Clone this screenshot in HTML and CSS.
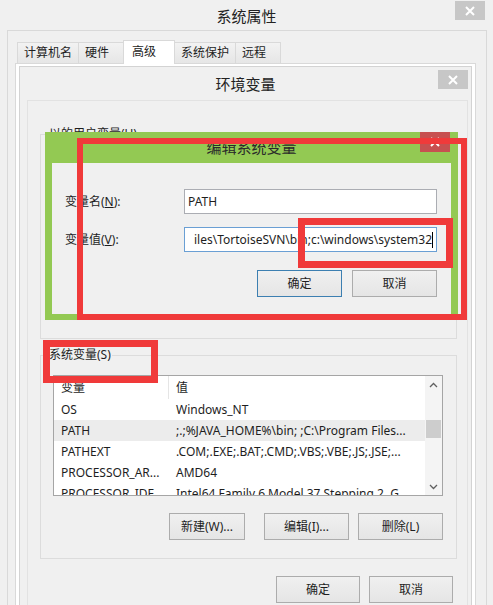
FILE: index.html
```html
<!DOCTYPE html>
<html lang="zh-CN">
<head>
    <meta charset="UTF-8">
    <meta name="viewport" content="width=device-width, initial-scale=1.0">
    <title>系统属性 - 环境变量</title>
    <link rel="stylesheet" href="styles.css">
</head>
<body>
    <div class="window window-sys">
        <div class="titlebar">
            <span>系统属性</span>
            <span class="close close-sys">
                <svg width="10" height="10" viewBox="0 0 10 10"><path d="M1 1L9 9M9 1L1 9" stroke="#fff" stroke-width="2"/></svg>
            </span>
        </div>
        <div class="sys-body">
            <div class="tabs">
                <div class="tab">计算机名</div>
                <div class="tab">硬件</div>
                <div class="tab tab-active">高级</div>
                <div class="tab">系统保护</div>
                <div class="tab">远程</div>
            </div>
            <div class="tab-panel">
                <div class="window window-env">
                    <div class="titlebar env-title">
                        <span>环境变量</span>
                        <span class="close close-env">
                            <svg width="10" height="10" viewBox="0 0 10 10"><path d="M1 1L9 9M9 1L1 9" stroke="#fff" stroke-width="2"/></svg>
                        </span>
                    </div>
                    <div class="env-body">
                        <fieldset class="group group-user">
                            <legend>以的用户变量(U)</legend>
                        </fieldset>

                        <fieldset class="group group-sys">
                            <legend>系统变量(S)</legend>
                            <div class="list">
                                <div class="list-table">
                                    <div class="row list-head">
                                        <div class="col-name">变量</div>
                                        <div class="col-value">值</div>
                                    </div>
                                    <div class="row">
                                        <div class="col-name">OS</div>
                                        <div class="col-value">Windows_NT</div>
                                    </div>
                                    <div class="row row-active">
                                        <div class="col-name">PATH</div>
                                        <div class="col-value">;.;%JAVA_HOME%\bin; ;C:\Program Files...</div>
                                    </div>
                                    <div class="row">
                                        <div class="col-name">PATHEXT</div>
                                        <div class="col-value">.COM;.EXE;.BAT;.CMD;.VBS;.VBE;.JS;.JSE;...</div>
                                    </div>
                                    <div class="row">
                                        <div class="col-name">PROCESSOR_AR...</div>
                                        <div class="col-value">AMD64</div>
                                    </div>
                                    <div class="row">
                                        <div class="col-name">PROCESSOR_IDE...</div>
                                        <div class="col-value">Intel64 Family 6 Model 37 Stepping 2, G...</div>
                                    </div>
                                </div>
                                <div class="scrollbar">
                                    <div class="arrow">
                                        <svg width="9" height="6" viewBox="0 0 9 6"><path d="M1 5L4.5 1.5L8 5" fill="none" stroke="#606060" stroke-width="1.3"/></svg>
                                    </div>
                                    <div class="track"><div class="thumb"></div></div>
                                    <div class="arrow">
                                        <svg width="9" height="6" viewBox="0 0 9 6"><path d="M1 1L4.5 4.5L8 1" fill="none" stroke="#606060" stroke-width="1.3"/></svg>
                                    </div>
                                </div>
                            </div>
                            <div class="group-actions">
                                <button class="btn btn-new">新建(W)...</button>
                                <button class="btn">编辑(I)...</button>
                                <button class="btn">删除(L)</button>
                            </div>
                        </fieldset>

                        <div class="env-actions">
                            <button class="btn">确定</button>
                            <button class="btn">取消</button>
                        </div>
                    </div>
                </div>
            </div>
        </div>
    </div>

    <!-- edit dialog sits on top of the env window -->
    <div class="window window-edit">
        <div class="titlebar edit-title">
            <span>编辑系统变量</span>
            <span class="close close-edit">
                <svg width="10" height="10" viewBox="0 0 10 10"><path d="M1 1L9 9M9 1L1 9" stroke="#fff" stroke-width="2"/></svg>
            </span>
        </div>
        <div class="edit-body">
            <div class="form-grid">
                <label>变量名(<u>N</u>):</label>
                <div class="field">PATH</div>
                <label>变量值(<u>V</u>):</label>
                <div class="field field-focus"><span>iles\TortoiseSVN\bin;c:\windows\system32</span><span class="caret"></span></div>
            </div>
            <div class="edit-actions">
                <button class="btn btn-default">确定</button>
                <button class="btn">取消</button>
            </div>
        </div>
    </div>

    <!-- red annotation boxes -->
    <div class="mark mark-edit"></div>
    <div class="mark mark-value"></div>
    <div class="mark mark-sys"></div>
</body>
</html>
```

FILE: styles.css
```css
* {
    box-sizing: border-box;
}
body {
    margin: 0;
    width: 493px;
    height: 605px;
    overflow: hidden;
    position: relative;
    background: #f0f0f0;
    font-family: "Noto Sans", "Noto Sans CJK SC", sans-serif;
    font-size: 12px;
    line-height: 16px;
    color: #1e1e1e;
}
u {
    text-decoration: underline;
}
.window {
    background: #f0f0f0;
}
.window-sys {
    height: 605px;
    display: flex;
    flex-direction: column;
}
.titlebar {
    position: relative;
    height: 30px;
    display: flex;
    align-items: center;
    justify-content: center;
    padding-top: 1px;
    font-size: 15px;
    color: #222;
}
.close {
    position: absolute;
    width: 30px;
    height: 19px;
    display: flex;
    align-items: center;
    justify-content: center;
    background: #c7c7c7;
}
.close-sys {
    top: 1px;
    right: 8px;
}
.sys-body {
    flex: 1;
    min-height: 0;
    margin: 0 6px 0 7px;
    border: 1px solid #d9d9d9;
    border-bottom: 0;
    padding: 9px 10px 0 7px;
    display: flex;
    flex-direction: column;
}
.tabs {
    display: flex;
    align-items: flex-end;
    height: 23px;
    padding-left: 2px;
}
.tab {
    height: 21px;
    min-width: 46px;
    padding: 0 6px;
    margin-right: -1px;
    border: 1px solid #d9d9d9;
    border-bottom: 0;
    background: linear-gradient(#f2f2f2, #e6e6e6);
    line-height: 20px;
}
.tab-active {
    position: relative;
    z-index: 1;
    height: 24px;
    min-width: 52px;
    margin-bottom: -1px;
    padding-left: 8px;
    background: #fff;
    line-height: 21px;
}
.tab-panel {
    flex: 1;
    min-height: 0;
    border: 1px solid #d9d9d9;
    border-bottom: 0;
    background: #fff;
    padding: 2px 3px 0 3px;
}
.window-env {
    height: 100%;
    border: 1px solid #d3d3d3;
    border-bottom: 0;
    display: flex;
    flex-direction: column;
}
.env-title {
    height: 33px;
    flex: none;
}
.close-env {
    top: 3px;
    right: 3px;
}
.env-body {
    flex: 1;
    margin: 0 3px 0 7px;
    border: 1px solid #e2e2e2;
    border-bottom: 0;
    padding: 25px 10px 0 12px;
}
.group {
    margin: 0;
    min-width: 0;
    border: 1px solid #dcdcdc;
    padding: 12px 13px 18px 12px;
}
.group legend {
    margin-left: -5px;
    padding: 0 1px;
    line-height: 16px;
}
.group-user {
    height: 213px;
}
.group-sys {
    margin-top: 8px;
}
.list {
    height: 121px;
    display: flex;
    border: 1px solid #a5a5a5;
    background: #fff;
}
.list-table {
    flex: 1;
    min-width: 0;
    overflow: hidden;
}
.row {
    display: flex;
    height: 21px;
    line-height: 21px;
    white-space: nowrap;
}
.list-head {
    height: 23px;
    line-height: 23px;
}
.list-head .col-name {
    border-right: 1px solid #e5e5e5;
}
.row-active {
    background: #ececec;
}
.col-name {
    width: 115px;
    flex: none;
    padding-left: 7px;
    overflow: hidden;
}
.col-value {
    flex: 1;
    min-width: 0;
    padding-left: 7px;
    overflow: hidden;
}
.scrollbar {
    width: 17px;
    flex: none;
    display: flex;
    flex-direction: column;
    background: #f4f4f4;
}
.arrow {
    height: 17px;
    display: flex;
    align-items: center;
    justify-content: center;
}
.track {
    flex: 1;
    padding: 27px 1px 0 1px;
}
.thumb {
    height: 18px;
    background: #cdcdcd;
}
.btn {
    height: 27px;
    width: 85px;
    padding: 0;
    border: 1px solid #acacac;
    background: linear-gradient(#f0f0f0, #e5e5e5);
    font: inherit;
    color: #1e1e1e;
}
.btn-default {
    border-color: #3c7fb1;
}
.group-actions {
    display: flex;
    justify-content: flex-end;
    gap: 9px;
    margin-top: 17px;
}
.btn-new {
    width: 76px;
    margin-right: 10px;
}
.env-actions {
    display: flex;
    justify-content: flex-end;
    gap: 9px;
    margin: 17px 4px 0 0;
}
.env-actions .btn {
    width: 84px;
}

/* edit dialog */
.window-edit {
    position: absolute;
    left: 45px;
    top: 132px;
    width: 413px;
    height: 188px;
    padding: 0 7px 6px;
    background: #93c953;
    display: flex;
    flex-direction: column;
}
.edit-title {
    height: 31px;
    flex: none;
    padding: 0 0 2px;
    color: #2a2a2a;
}
.close-edit {
    top: 0;
    right: 1px;
    width: 30px;
    height: 20px;
    background: #c75050;
}
.edit-body {
    flex: 1;
    background: #f0f0f0;
    padding: 26px 14px 0 13px;
}
.form-grid {
    display: grid;
    grid-template-columns: 119px 253px;
    row-gap: 13px;
    align-items: center;
}
.field {
    height: 25px;
    border: 1px solid #abadb3;
    background: #fff;
    padding: 0 3px;
    line-height: 23px;
    white-space: nowrap;
    overflow: hidden;
}
.field-focus {
    display: flex;
    justify-content: flex-end;
    align-items: center;
    border-color: #6a9fd4;
}
.caret {
    flex: none;
    width: 1px;
    height: 16px;
    background: #000;
}
.edit-actions {
    display: flex;
    justify-content: flex-end;
    gap: 10px;
    margin-top: 18px;
}

/* annotations */
.mark {
    position: absolute;
    border: 6px solid #f03a3a;
}
.mark-edit {
    left: 77px;
    top: 138px;
    width: 390px;
    height: 182px;
}
.mark-value {
    left: 298px;
    top: 218px;
    width: 155px;
    height: 50px;
    border-width: 7px;
}
.mark-sys {
    left: 43px;
    top: 340px;
    width: 115px;
    height: 43px;
    border-width: 7px;
}
```
